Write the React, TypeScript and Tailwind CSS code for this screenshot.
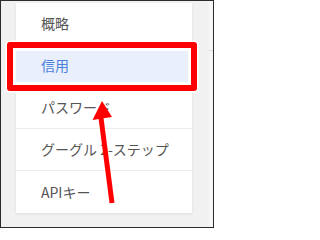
import React from 'react';

const items = [
  { label: '概略', active: false },
  { label: '信用', active: true },
  { label: 'パスワード', active: false },
  { label: 'グーグル 2-ステップ', active: false },
  { label: 'APIキー', active: false },
];

export default function App() {
  return (
    <div className="relative w-[214px] h-[228px] font-['Noto_Sans_CJK_JP','Noto_Sans',sans-serif]">
      <div className="flex h-full border border-[#2b2b2b] bg-[#f1f1f1]">
        {/* Menu card */}
        <div className="ml-[15px] mt-[2px] w-[176px] self-start bg-white shadow-[0_1px_3px_rgba(0,0,0,0.08)]">
          {items.map((item, i) => (
            <div
              key={i}
              className={`flex h-[42px] items-center whitespace-nowrap pl-[25px] text-[14px] ${
                i < items.length - 1 ? 'border-b border-[#ececec]' : ''
              } ${item.active ? 'bg-[#e9f0fb] text-[#4a7fe0]' : 'text-[#555]'}`}
            >
              {item.label}
            </div>
          ))}
        </div>
        <div className="flex-1" />
        {/* Edge of the content panel */}
        <div className="w-[4px] bg-[#f6f6f6]">
          <div className="mt-[49px] border-t border-[#dcdcdc]" />
        </div>
      </div>

      {/* Annotation: red highlight box */}
      <div className="absolute left-[7px] top-[42px] h-[49px] w-[190px] rounded-[3px] border-[6px] border-[#ff0000] shadow-[0_0_0_1.5px_#fff,inset_0_0_0_3px_#fff]" />

      {/* Annotation: red arrow */}
      <svg className="absolute left-0 top-0" width="214" height="228" viewBox="0 0 214 228">
        <line x1="112" y1="203" x2="100.5" y2="114" stroke="#ff0000" strokeWidth="5" />
        <polygon points="102,101 92.5,120 112,117" fill="#ff0000" />
      </svg>
    </div>
  );
}
